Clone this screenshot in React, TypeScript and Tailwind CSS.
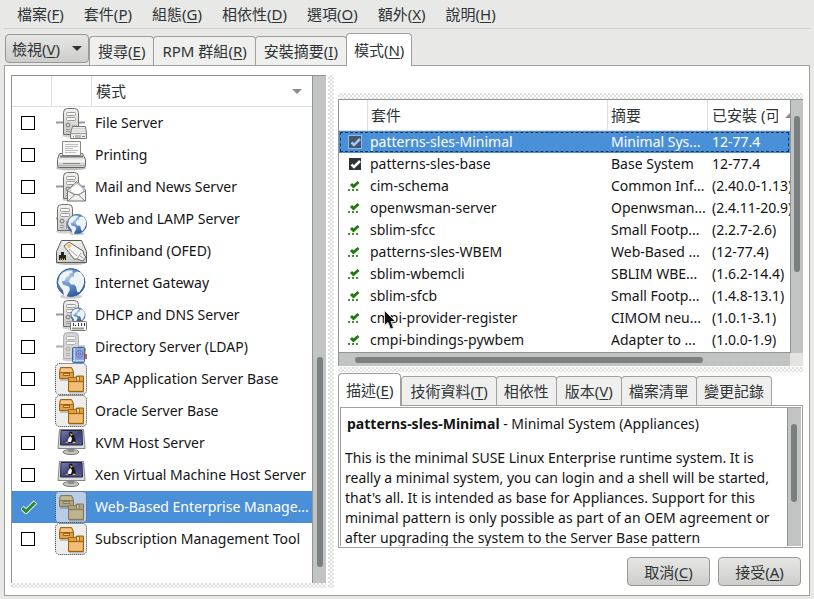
import React from "react";

const HATCH =
  "bg-[conic-gradient(#e0e0df_25%,#fafafa_0_50%,#e0e0df_0_75%,#fafafa_0)] bg-[size:4px_4px]";

/* ---------- icons ---------- */

function Gradients() {
  return (
    <svg className="absolute size-0" aria-hidden="true">
      <defs>
        <radialGradient id="sea" cx="40%" cy="30%" r="75%">
          <stop offset="0" stopColor="#9fc1e8" />
          <stop offset=".55" stopColor="#5183c0" />
          <stop offset="1" stopColor="#2c5796" />
        </radialGradient>
        <linearGradient id="metal" x1="0" y1="0" x2="0" y2="1">
          <stop offset="0" stopColor="#f2f2f0" />
          <stop offset="1" stopColor="#c9c9c7" />
        </linearGradient>
        <linearGradient id="screen" x1="0" y1="0" x2="1" y2="1">
          <stop offset="0" stopColor="#7d80ae" />
          <stop offset=".5" stopColor="#40447a" />
          <stop offset="1" stopColor="#5a5e96" />
        </linearGradient>
      </defs>
    </svg>
  );
}

function Server({ x = 8, dim = false }: { x?: number; dim?: boolean }) {
  const line = dim ? "#b0b0b0" : "#9a9a98";
  return (
    <g>
      <path d="M1 15.500H30" stroke={line} strokeWidth="2" />
      <ellipse cx={x + 8} cy="28.500" rx="9" ry="2" fill="#000" opacity=".18" />
      <path
        d={`M${x + 0.5} 5.500q0-4 4-4h7q4 0 4 4v22h-15z`}
        fill={dim ? "#d4d4d4" : "url(#metal)"}
        stroke={dim ? "#b0b0b0" : "#6e6e6c"}
      />
      <rect x={x + 3.5} y="5.500" width="9" height="3" rx="1" fill="#f6f6f4" stroke={line} />
      <rect x={x + 3.5} y="10.500" width="9" height="3" rx="1" fill="#f6f6f4" stroke={line} />
      <circle cx={x + 5} cy="18" r="2" fill="#d0d0ce" stroke={dim ? line : "#777"} />
      <path d={`M${x + 3} 22.500h4M${x + 3} 24.500h4M${x + 9.5} 18v8M${x + 11.5} 18v8M${x + 13.5} 18v8`} stroke={line} />
    </g>
  );
}

function Globe({ cx, cy, r }: { cx: number; cy: number; r: number }) {
  return (
    <g transform={`translate(${cx} ${cy}) scale(${r / 14.5})`}>
      <ellipse cx="0" cy="14" rx="11" ry="2.500" fill="#000" opacity=".2" />
      <circle r="14" fill="url(#sea)" stroke="#3d6396" />
      <g fill="#eef2f4">
        <path d="M-11-7l3-3 5-2 4 0 1 2-3 1-1 2-3 2-1 3-3 1 1 3 3 1 3 1 1 3-2 4-2 4-2-2-1-5-3-4-2-4z" />
        <path d="M3-9l3-2 4 1 3 5 0 6-2 5-3 4-2-1-1-5-2-2-3 0-2-3 2-4 3-1z" />
        <path d="M0-5l2-1 0 2-2 1z" />
      </g>
      <path d="M-11-3A12 12 0 0 1 11-3Q0 3-11-3" fill="#fff" opacity=".15" />
    </g>
  );
}

function FileServerIcon() {
  return (
    <>
      <Server />
      <path d="M17.500 19.500h13l1 7v5h-16v-5z" fill="#ececea" stroke="#777" />
      <path d="M15.500 26.500h16" stroke="#999" />
      <path d="M18 21.500h12M18 24h12" stroke="#cfcfcd" />
      <path d="M18 29.500h1M21 28v3M23 28v3M25 28v3M27 29.500h3" stroke="#888" />
    </>
  );
}

function PrinterIcon() {
  return (
    <>
      <ellipse cx="16" cy="29" rx="15" ry="2.500" fill="#000" opacity=".25" />
      <path d="M4.500 14.500h23l3 6v6q0 2-2 2h-24q-2 0-2-2v-6z" fill="url(#metal)" stroke="#666" />
      <path d="M7.500 2.500h18v14h-18z" fill="#f8f8f8" stroke="#888" />
      <path d="M10 5.500h13M10 7.500h13M10 9.500h8M10 11.500h13M10 13.500h11" stroke="#bdbdbd" />
      <path d="M5 17.500h23" stroke="#777" strokeWidth="2" />
      <path d="M3 20.500h27v3h-27z" fill="#f4f4f2" />
      <path d="M8 24.500h17" stroke="#888" />
      <path d="M3 26.500h27" stroke="#b5b5b5" />
    </>
  );
}

function MailIcon() {
  return (
    <>
      <Server />
      <path d="M12.500 19l9.500-8.500 8.500 8.500v11h-18z" fill="#f0f0ee" stroke="#777" />
      <path d="M15 18l7-6 6.500 6v3l-6 3-7-3z" fill="#fff" stroke="#bbb" />
      <path d="M13 30l7-6.500h3l7 6.500M13 20l7 4M30 20l-7 4" fill="none" stroke="#888" />
    </>
  );
}

function WebIcon() {
  return (
    <>
      <Server x={2} />
      <Globe cx={22} cy={21} r={10} />
    </>
  );
}

function InfinibandIcon() {
  return (
    <>
      <ellipse cx="16" cy="28" rx="15" ry="2" fill="#000" opacity=".25" />
      <path d="M6.500 5.500h20l5 11v11h-30v-11z" fill="url(#metal)" stroke="#5a5a58" />
      <path d="M4 25v-5h2v-3h3v3h2v5z" fill="#222" />
      <path d="M5 24.500h5" stroke="#d9c23a" strokeWidth="2" strokeDasharray="1 1" />
      <path d="M9 11l5-4 14 9 1 4 2 2-3 4-3-1-2-1-4 0z" fill="#f6f6f4" stroke="#666" />
      <path d="M11 11l3-2.500 3 2-3 3z" fill="#f2c66a" />
      <path d="M14 14l8 7M22 24l4-6M25 21l5 3" stroke="#9a9a98" />
    </>
  );
}

function DnsIcon() {
  return (
    <>
      <Server />
      <Globe cx={23} cy={16} r={7.5} />
      <rect x="15.500" y="22.500" width="16" height="9" rx="1" fill="#fff" stroke="#777" />
      <path d="M18.500 24v3M20.500 26v1M23.500 24v3M26.500 24v3M29.500 24v3" stroke="#333" />
      <path d="M17.500 29.500h12" stroke="#333" strokeWidth="2" strokeDasharray="1 1" />
    </>
  );
}

function DirectoryIcon() {
  return (
    <>
      <Server dim />
      <path d="M29 17h2v4h-2z" fill="#8fc04f" />
      <path d="M29 20h2v4h-2z" fill="#f0c040" />
      <path d="M29 23h3v5h-3z" fill="#e0524a" />
      <rect x="17.500" y="16.500" width="12" height="15" rx="1" fill="#86a8dc" stroke="#4468a4" />
      <path d="M19.500 17v12M18 29.500h11" stroke="#c3d5f0" />
      <circle cx="24.500" cy="23" r="3.500" fill="none" stroke="#7a6cb0" />
      <circle cx="24.500" cy="23" r="1.300" fill="none" stroke="#7a6cb0" />
    </>
  );
}

function PatternIcon({ dim = false }: { dim?: boolean }) {
  const stroke = dim ? "#857a60" : "#a0640f";
  const light = dim ? "#c4b893" : "#f6c887";
  const dark = dim ? "#ada27e" : "#dfa04a";
  return (
    <>
      <rect
        x=".5"
        y=".5"
        width="31"
        height="31"
        rx="4"
        fill={dim ? "#b9cde6" : "#ededec"}
        stroke={dim ? "#2f4a6c" : "#333"}
        strokeDasharray="1 1"
      />
      <path d="M5 17h9M14 29.500h15" stroke="#000" strokeWidth="2" opacity=".2" />
      {/* open tray */}
      <path d="M5.500 4.500h11l2 4v7h-14v-7z" fill={dark} stroke={stroke} />
      <path d="M6.500 5.500h9.500l1.500 3.500h-12z" fill={light} />
      <path d="M4 9.500h14.500" stroke={stroke} />
      <path d="M8.500 10.500h6v2h-6z" fill={light} stroke={stroke} />
      {/* folder box */}
      <path d="M13.500 14.500h7l1-1.500h7v15.500h-15z" fill={dark} stroke={stroke} />
      <path d="M14.500 19.500h13v8h-13z" fill={light} opacity=".75" />
      <path d="M14 18.500h14.500" stroke={stroke} />
      <path d="M21.500 13.500h3v4l-1.500 1-1.500-1z" fill={light} stroke={stroke} />
    </>
  );
}

function MonitorIcon() {
  return (
    <>
      <ellipse cx="16" cy="25" rx="8" ry="2.500" fill="#c4c4c2" stroke="#777" />
      <path d="M13 20h6v5h-6z" fill="#8c8c8a" />
      <path d="M4.500 2.500h24l1.500 19h-27z" fill="#dddddb" stroke="#858583" />
      <path d="M6 3.500h21l.500 14.500h-22z" fill="url(#screen)" stroke="#23264c" />
      <path d="M14.500 5q2-1.500 3 1l2 4q2 4 0 6h-6q-1-2 0-5z" fill="#15151c" />
      <path d="M15 9q2 1 2 3l-1 3h-3q-1-2 2-6z" fill="#f4f4f4" />
      <path d="M15 6.500l3 .500-2 2zM10.500 16q1-2 3 0zM17 16q2-3 4 0z" fill="#f0c33c" />
    </>
  );
}

function PatternGlyph({ kind }: { kind: string }) {
  return (
    <svg viewBox="0 0 32 32" className="block size-8" fill="none" aria-hidden="true">
      {kind === "file" && <FileServerIcon />}
      {kind === "print" && <PrinterIcon />}
      {kind === "mail" && <MailIcon />}
      {kind === "web" && <WebIcon />}
      {kind === "ib" && <InfinibandIcon />}
      {kind === "globe" && <Globe cx={16} cy={15.5} r={14.5} />}
      {kind === "dns" && <DnsIcon />}
      {kind === "ldap" && <DirectoryIcon />}
      {kind === "pattern" && <PatternIcon />}
      {kind === "pattern-dim" && <PatternIcon dim />}
      {kind === "monitor" && <MonitorIcon />}
    </svg>
  );
}

function PackageState({ kind }: { kind: string }) {
  if (kind === "auto") {
    return (
      <svg viewBox="0 0 14 14" className="block size-3.5" aria-label="auto">
        <path d="M3 5l2.500 2.500L10.500 3" fill="none" stroke="#23790f" strokeWidth="3" />
        <path d="M0 11h2M4 11h2M8 11h2" stroke="#3f9430" strokeWidth="2" />
      </svg>
    );
  }
  const selected = kind === "selected";
  return (
    <svg viewBox="0 0 14 14" className="block size-3.5" aria-label="installed">
      <rect
        x={selected ? 0.5 : 1}
        y={selected ? 0.5 : 1}
        width={selected ? 13 : 12}
        height={selected ? 13 : 12}
        fill={selected ? "#41576f" : "#2e3436"}
        stroke={selected ? "#8fb9e8" : "none"}
      />
      <path
        d="M3.500 7.500l2.500 2.500 6-6"
        fill="none"
        stroke={selected ? "#a5c8ef" : "#fff"}
        strokeWidth="2.500"
      />
    </svg>
  );
}

/* ---------- data ---------- */

const menus = [
  ["檔案", "F"],
  ["套件", "P"],
  ["組態", "G"],
  ["相依性", "D"],
  ["選項", "O"],
  ["額外", "X"],
  ["說明", "H"],
];

const viewTabs = [
  ["搜尋", "E"],
  ["RPM 群組", "R"],
  ["安裝摘要", "I"],
  ["模式", "N"],
];

const patterns = [
  ["File Server", "file"],
  ["Printing", "print"],
  ["Mail and News Server", "mail"],
  ["Web and LAMP Server", "web"],
  ["Infiniband (OFED)", "ib"],
  ["Internet Gateway", "globe"],
  ["DHCP and DNS Server", "dns"],
  ["Directory Server (LDAP)", "ldap"],
  ["SAP Application Server Base", "pattern"],
  ["Oracle Server Base", "pattern"],
  ["KVM Host Server", "monitor"],
  ["Xen Virtual Machine Host Server", "monitor"],
  ["Web-Based Enterprise Manage...", "pattern-dim"],
  ["Subscription Management Tool", "pattern"],
];

const packages = [
  ["selected", "patterns-sles-Minimal", "Minimal Sys...", "12-77.4"],
  ["installed", "patterns-sles-base", "Base System", "12-77.4"],
  ["auto", "cim-schema", "Common Inf...", "(2.40.0-1.13)"],
  ["auto", "openwsman-server", "Openwsman...", "(2.4.11-20.9)"],
  ["auto", "sblim-sfcc", "Small Footp...", "(2.2.7-2.6)"],
  ["auto", "patterns-sles-WBEM", "Web-Based ...", "(12-77.4)"],
  ["auto", "sblim-wbemcli", "SBLIM WBE...", "(1.6.2-14.4)"],
  ["auto", "sblim-sfcb", "Small Footp...", "(1.4.8-13.1)"],
  ["auto", "cmpi-provider-register", "CIMOM neu...", "(1.0.1-3.1)"],
  ["auto", "cmpi-bindings-pywbem", "Adapter to ...", "(1.0.0-1.9)"],
];

const detailTabs = [
  ["描述", "E"],
  ["技術資料", "T"],
  ["相依性", ""],
  ["版本", "V"],
  ["檔案清單", ""],
  ["變更記錄", ""],
];

/* ---------- parts ---------- */

function Label({ text, accel }: { text: string; accel: string }) {
  return (
    <>
      {text}
      {accel && (
        <>
          (<span className="underline underline-offset-2">{accel}</span>)
        </>
      )}
    </>
  );
}

function Tab({ text, accel, active }: { text: string; accel: string; active: boolean }) {
  const base = "rounded-t border border-b-0 border-[#a0a09e]";
  return (
    <button
      role="tab"
      aria-selected={active}
      className={
        active
          ? `${base} relative -mb-px h-[33px] bg-white px-[7px]`
          : `${base} -mr-px h-[29px] bg-[#efefee] ${accel ? "px-2" : "px-[7px]"}`
      }
    >
      <Label text={text} accel={accel} />
    </button>
  );
}

function PatternTree() {
  return (
    <section className="flex w-[315px] flex-none flex-col">
      <div className="flex min-h-0 flex-1 border-t border-l border-[#929492]">
        <div className="min-w-0 flex-1 overflow-hidden bg-white">
          <table className="w-full table-fixed border-separate border-spacing-0 text-left">
            <colgroup>
              <col className="w-10" />
              <col className="w-10" />
              <col />
            </colgroup>
            <thead>
              <tr className="h-[31px] text-[#2e3436]">
                <th className="border-r border-b border-[#dededd]" />
                <th className="border-r border-b border-[#dededd]" />
                <th className="border-b border-[#dededd] px-1 font-normal">
                  <span className="flex items-center justify-between pr-1.5">
                    模式
                    <svg viewBox="0 0 10 5" className="h-[5px] w-2.5" aria-hidden="true">
                      <path d="M0 0h10L5 5z" fill="#8b8d8d" />
                    </svg>
                  </span>
                </th>
              </tr>
            </thead>
            <tbody className="text-sm">
              {patterns.map(([name, icon]) => {
                const on = icon === "pattern-dim";
                return (
                  <tr key={name} className={on ? "h-8 bg-[#4a90d9] text-white" : "h-8"}>
                    <td className="p-0 pl-[9px]">
                      <label className="relative block size-3.5">
                        <input
                          type="checkbox"
                          defaultChecked={on}
                          aria-label={name}
                          className={
                            on
                              ? "block size-3.5 appearance-none"
                              : "block size-3.5 appearance-none border border-black bg-white"
                          }
                        />
                        {on && (
                          <svg viewBox="0 0 16 14" className="absolute top-0 left-0 h-3.5 w-4" aria-hidden="true">
                            <path d="M1 7.500l4 4L14.500 2" fill="none" stroke="#d7ecd9" strokeWidth="5" />
                            <path d="M1.500 8l3.500 3.500L14 2.500" fill="none" stroke="#2d8540" strokeWidth="3" />
                          </svg>
                        )}
                      </label>
                    </td>
                    <td className="p-0 pl-[3px]">
                      <PatternGlyph kind={icon} />
                    </td>
                    <td className="p-0 pl-[3px] whitespace-nowrap">{name}</td>
                  </tr>
                );
              })}
            </tbody>
          </table>
        </div>
        <div className="flex w-3.5 flex-none flex-col items-center justify-end border-l border-[#929492] bg-[#c2c4c3] pb-4">
          <div className="h-[210px] w-1.5 rounded-full bg-[#7b7f7f]" />
        </div>
      </div>
      <div className={`h-[5px] flex-none ${HATCH}`} />
    </section>
  );
}

function PackageTable() {
  return (
    <div className="flex min-h-0 flex-1 flex-col border-t border-l border-[#929492]">
      <div className="flex min-h-0 flex-1">
        <div className="relative min-w-0 flex-1 overflow-hidden border-b border-[#929492] bg-white">
          <table className="w-full table-fixed border-separate border-spacing-0 text-left whitespace-nowrap">
            <colgroup>
              <col className="w-[29px]" />
              <col />
              <col className="w-[100px]" />
              <col className="w-[82px]" />
            </colgroup>
            <thead>
              <tr className="h-[31px] text-[#2e3436]">
                <th className="border-r border-b border-[#dededd]" />
                <th className="border-r border-b border-[#dededd] px-[3px] font-normal">套件</th>
                <th className="border-r border-b border-[#dededd] px-[3px] font-normal">摘要</th>
                <th className="border-b border-[#dededd] p-0 pl-1 font-normal">
                  <span className="flex items-center justify-between">
                    <span className="w-[66px] overflow-hidden">已安裝 (可用)</span>
                    <svg viewBox="0 0 5 5" className="size-[5px]" aria-hidden="true">
                      <path d="M0 5h5V0z" fill="#8b8d8d" />
                    </svg>
                  </span>
                </th>
              </tr>
            </thead>
            <tbody className="text-sm">
              {packages.map(([state, name, summary, version]) => (
                <tr
                  key={name}
                  className={
                    state === "selected"
                      ? "h-[22px] bg-[#4a90d9] text-white outline-1 -outline-offset-2 outline-[#1d3450] outline-dashed"
                      : "h-[22px]"
                  }
                >
                  <td className="p-0 pl-[9px]">
                    <PackageState kind={state} />
                  </td>
                  <td className="p-0 pl-0.5">{name}</td>
                  <td className="p-0 pl-[3px]">{summary}</td>
                  <td className="overflow-hidden p-0 pl-1">{version}</td>
                </tr>
              ))}
            </tbody>
          </table>
          <svg viewBox="0 0 12 20" className="absolute top-[210px] left-[45px] h-5 w-3" aria-hidden="true">
            <path d="M.500.500v15l3.500-3 2.500 6.500 3-1.200L7 11.500h4.500z" fill="#111" stroke="#ddd" />
          </svg>
        </div>
        <div className="w-[13px] flex-none border-l border-[#929492] bg-[#c2c4c3] pt-4 pl-[3px]">
          <div className="h-[156px] w-1.5 rounded-full bg-[#7b7f7f]" />
        </div>
      </div>
      <div className="flex h-[13px] flex-none">
        <div className="flex flex-1 items-center bg-[#c2c4c3] pl-4">
          <div className="h-1.5 w-4/5 rounded-full bg-[#7b7f7f]" />
        </div>
        <div className="w-[13px] flex-none bg-[#e4e4e3]" />
      </div>
    </div>
  );
}

export default function App() {
  return (
    <div className="flex h-screen flex-col overflow-hidden bg-[#e8e8e7] font-['Noto_Sans','Noto_Sans_CJK_TC',sans-serif] text-[15px] leading-5 text-[#141414]">
      <Gradients />
      <nav className="mx-1 flex h-[29px] flex-none items-center border-b border-[#cfcfce] pl-[3px] text-[#2e3436]">
        {menus.map(([text, accel]) => (
          <button key={text} className="px-2.5">
            <Label text={text} accel={accel} />
          </button>
        ))}
      </nav>

      <div className="flex h-9 flex-none items-end pl-[5px] text-[#2e3436]">
        <button className="mb-0.5 flex h-[29px] items-center gap-3 rounded border border-[#979795] bg-linear-to-b from-[#e6e6e5] to-[#cdcdcb] px-1.5">
          <span>
            <Label text="檢視" accel="V" />
          </span>
          <svg viewBox="0 0 10 5" className="h-[5px] w-2.5" aria-hidden="true">
            <path d="M0 0h10L5 5z" fill="#2e3436" />
          </svg>
        </button>
        <div role="tablist" className="flex items-end">
          {viewTabs.map(([text, accel], i) => (
            <Tab key={text} text={text} accel={accel} active={i === 3} />
          ))}
        </div>
      </div>

      <main className="mx-1 mb-[3px] flex min-h-0 flex-1 border border-[#a0a09e] bg-white px-1.5 pt-[9px] pb-[7px]">
        <PatternTree />
        <div className={`mx-0.5 w-1.5 flex-none ${HATCH}`} />
        <div className="flex min-w-0 flex-1 flex-col pt-[18px] pb-0.5 pl-0.5">
          <div className={`h-1.5 flex-none ${HATCH}`} />
          <PackageTable />
          <div className={`mt-px h-[5px] flex-none ${HATCH}`} />

          <div role="tablist" className="flex h-[33px] flex-none items-end text-[#2e3436]">
            {detailTabs.map(([text, accel], i) => (
              <Tab key={text} text={text} accel={accel} active={i === 0} />
            ))}
          </div>
          <div className="flex h-[143px] flex-none border border-[#a0a09e] bg-white p-px">
            <div className="flex min-w-0 flex-1 border-t border-l border-[#a0a09e]">
              <article className="min-w-0 flex-1 overflow-hidden px-1 pt-1.5 text-sm">
                <p className="mb-3.5 pl-0.5">
                  <b>patterns-sles-Minimal</b> - Minimal System (Appliances)
                </p>
                <p>
                  This is the minimal SUSE Linux Enterprise runtime system. It is really a minimal system, you can
                  login and a shell will be started, that's all. It is intended as base for Appliances. Support for
                  this minimal pattern is only possible as part of an OEM agreement or after upgrading the system to
                  the Server Base pattern
                </p>
              </article>
              <div className="w-3.5 flex-none border-l border-[#929492] bg-[#c2c4c3] pt-4 pl-[3px]">
                <div className="h-[78px] w-1.5 rounded-full bg-[#7b7f7f]" />
              </div>
            </div>
          </div>

          <footer className="mt-[9px] flex flex-none justify-end gap-2 pr-0.5 text-[#2e3436]">
            <button className="h-[29px] w-[83px] rounded border border-[#979795] bg-linear-to-b from-[#e6e6e5] to-[#cdcdcb]">
              <Label text="取消" accel="C" />
            </button>
            <button className="h-[29px] w-[83px] rounded border border-[#979795] bg-linear-to-b from-[#e6e6e5] to-[#cdcdcb]">
              <Label text="接受" accel="A" />
            </button>
          </footer>
        </div>
      </main>
    </div>
  );
}
